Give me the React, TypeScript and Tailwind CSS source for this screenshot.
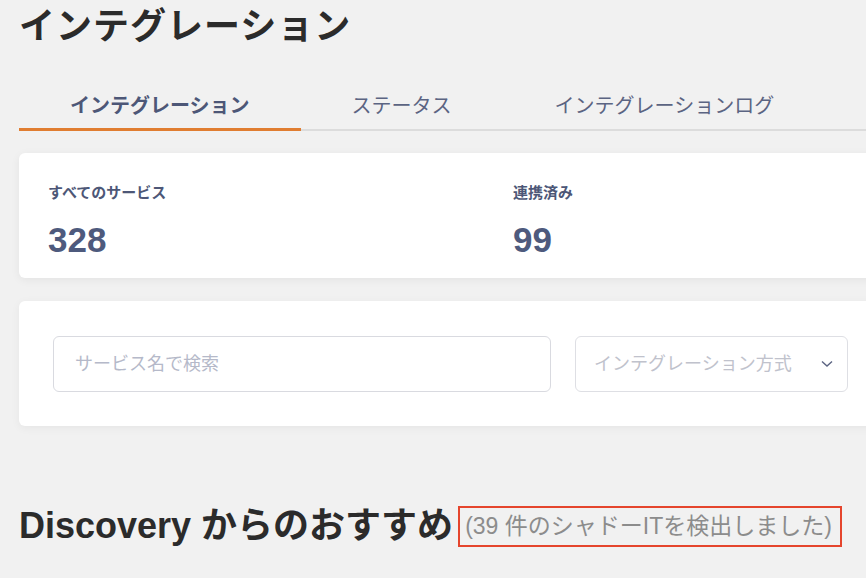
import React from "react";

const FONT = { fontFamily: '"Liberation Sans", "Noto Sans CJK JP", sans-serif' };

export default function App() {
  return (
    <div className="w-[866px] h-[578px] overflow-hidden bg-[#f1f1f1]" style={FONT}>
      <div className="w-[900px] pl-[19px]">
        <h1 className="pt-[5px] text-[36px] leading-[44px] font-bold text-[#2b2b2b] tracking-[1px]">インテグレーション</h1>

        <div className="mt-[43px] flex border-b-2 border-[#dcdcdc]">
          <div className="relative px-[51px] pb-[9px] text-[20px] leading-[28px] font-semibold text-[#4d5777]">
            インテグレーション
            <div className="absolute left-0 right-0 -bottom-[2px] h-[3px] bg-[#e07d31]" />
          </div>
          <div className="px-[51px] pb-[9px] text-[20px] leading-[28px] text-[#5b6482]">ステータス</div>
          <div className="px-[52px] pb-[9px] text-[20px] leading-[28px] text-[#5b6482]">インテグレーションログ</div>
        </div>

        <div className="mt-[22px] h-[125px] rounded-md bg-white shadow-[0_2px_10px_rgba(0,0,0,0.06)] pl-[29px] pt-[29px] grid grid-cols-[465px_1fr]">
          <div>
            <div className="text-[15px] leading-[22px] font-semibold text-[#4d5777]">すべてのサービス</div>
            <div className="mt-[16px] text-[35px] leading-[40px] font-semibold text-[#4e5a7d]">328</div>
          </div>
          <div>
            <div className="text-[15px] leading-[22px] font-semibold text-[#4d5777]">連携済み</div>
            <div className="mt-[16px] text-[35px] leading-[40px] font-semibold text-[#4e5a7d]">99</div>
          </div>
        </div>

        <div className="mt-[23px] h-[125px] rounded-md bg-white shadow-[0_2px_10px_rgba(0,0,0,0.05)] pl-[34px] pt-[35px] flex gap-[24px]">
          <div className="w-[498px] h-[56px] rounded-md border border-[#d9dae0] flex items-center pl-[21px] text-[18px] text-[#b5b9c9]">
            サービス名で検索
          </div>
          <div className="w-[273px] h-[56px] rounded-md border border-[#dedfe4] flex items-center pl-[18px] pr-[14px] justify-between text-[18px] text-[#c0c2cc]">
            <span>インテグレーション方式</span>
            <svg width="12" height="8" viewBox="0 0 12 8" fill="none">
              <path d="M1 1.5 L6 6 L11 1.5" stroke="#5b6482" strokeWidth="1.4" />
            </svg>
          </div>
        </div>

        <div className="mt-[79px] flex items-center">
          <h2 className="text-[36px] leading-[42px] font-bold text-[#2b2b2b]">Discovery からのおすすめ</h2>
          <div className="ml-[5px] h-[41px] border-2 border-[#e5452d] pl-[5px] pr-[8px] flex items-center text-[23px] text-[#8c8c8c]">
            (39 件のシャドーITを検出しました)
          </div>
        </div>
      </div>
    </div>
  );
}
